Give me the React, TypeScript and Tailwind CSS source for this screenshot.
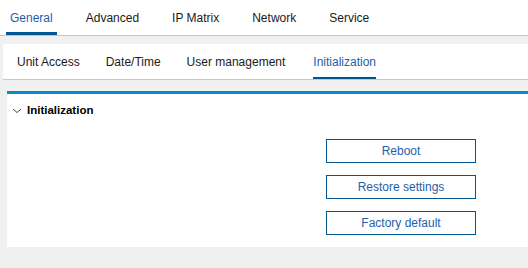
const mainTabs = ["General", "Advanced", "IP Matrix", "Network", "Service"];
const subTabs = ["Unit Access", "Date/Time", "User management", "Initialization"];
const actions = ["Reboot", "Restore settings", "Factory default"];

const App = () => {
  return (
    <div
      className="w-[528px] h-[268px] bg-[#f0f0f0] overflow-hidden text-[12px] text-[#1a1a1a]"
      style={{ fontFamily: '"Liberation Sans", Arial, sans-serif' }}
    >
      <div className="h-[36px] bg-white border-b border-[#c4c4c4] flex items-stretch pl-[6px] gap-[25px]">
        {mainTabs.map((t, i) => (
          <div
            key={t}
            className={
              i === 0
                ? "px-[4px] flex items-center border-b-[3px] border-[#005691] text-[#1f5ea8] pt-[3px]"
                : "px-[4px] flex items-center border-b-[3px] border-transparent pt-[3px]"
            }
          >
            {t}
          </div>
        ))}
      </div>

      <div className="ml-[3px] mt-[8px] h-[36px] bg-white border-b border-[#c8c8c8] flex items-stretch pl-[14px] gap-[26px]">
        {subTabs.map((t, i) => (
          <div
            key={t}
            className={
              i === 3
                ? "ml-[2px] flex items-center border-b-2 border-[#005691] text-[#1f5ea8] pt-[2px]"
                : "flex items-center border-b-2 border-transparent pt-[2px]"
            }
          >
            {t}
          </div>
        ))}
      </div>

      <div className="ml-[7px] mt-[11px] bg-white border-t-[3px] border-[#008ecf] pb-[12px]">
        <div className="flex items-center h-[33px] pl-[5px] pt-[1px]">
          <svg width="10" height="6" viewBox="0 0 10 6">
            <polyline points="1,1 5,4.5 9,1" fill="none" stroke="#444" strokeWidth="1" />
          </svg>
          <span className="ml-[5px] font-bold text-[11.5px] text-black">Initialization</span>
        </div>
        <div className="flex flex-col gap-[12px] ml-[319px] mt-[12px]">
          {actions.map((a) => (
            <button
              key={a}
              className="w-[150px] h-[24px] border border-[#005691] text-[#1f5ea8] text-[12px] bg-white flex items-center justify-center"
            >
              {a}
            </button>
          ))}
        </div>
      </div>
    </div>
  );
};

export default App;
